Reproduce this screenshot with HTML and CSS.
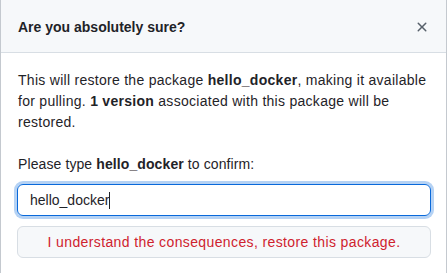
FILE: index.html
```html
<!DOCTYPE html>
<html>
<head>
<meta charset="utf-8">
<link rel="stylesheet" href="styles.css">
</head>
<body>
<div class="dialog">
  <div class="header">
    <h1 class="title">Are you absolutely sure?</h1>
    <button class="close" aria-label="Close">
      <svg width="16" height="16" viewBox="0 0 16 16"><path d="M3.72 3.72a.75.75 0 0 1 1.06 0L8 6.94l3.22-3.22a.75.75 0 1 1 1.06 1.06L9.06 8l3.22 3.22a.75.75 0 1 1-1.06 1.06L8 9.06l-3.22 3.22a.75.75 0 0 1-1.06-1.06L6.94 8 3.72 4.78a.75.75 0 0 1 0-1.06Z" fill="#57606a"/></svg>
    </button>
  </div>
  <div class="body">
    <p class="desc">This will restore the package <b>hello_docker</b>, making it available for pulling. <b>1 version</b> associated with this package will be restored.</p>
    <p class="label">Please type <b>hello_docker</b> to confirm:</p>
    <div class="input"><span>hello_docker</span><span class="caret"></span></div>
    <button class="danger">I understand the consequences, restore this package.</button>
  </div>
</div>
</body>
</html>
```
FILE: styles.css
```css
html, body {
  margin: 0;
  padding: 0;
  background: #ffffff;
}
body {
  font-family: "Liberation Sans", Arial, sans-serif;
  font-size: 14px;
  line-height: 21px;
  color: #1f2328;
}
.dialog {
  width: 445px;
  height: 273px;
  border-left: 1px solid #c4c9cf;
  border-right: 1px solid #c4c9cf;
  box-sizing: content-box;
}
.header {
  height: 52px;
  background: #f6f8fa;
  border-bottom: 1px solid #d8dee4;
  display: flex;
  align-items: center;
  justify-content: space-between;
  padding: 0 16px 0 17px;
}
.title {
  margin: 0;
  font-size: 14px;
  font-weight: bold;
  line-height: 21px;
  padding-top: 2px;
}
.close {
  border: 0;
  background: transparent;
  padding: 0;
  width: 16px;
  height: 16px;
  display: flex;
  margin-top: 2px;
}
.body {
  padding: 17px 15px 0 16px;
}
.desc {
  margin: 0 0 21px 1px;
  letter-spacing: 0.28px;
}
.label {
  margin: 0 0 9px 1px;
  letter-spacing: 0.1px;
}
.input {
  height: 30px;
  border: 1px solid #0969da;
  border-radius: 6px;
  box-shadow: 0 0 0 3px rgba(9, 105, 218, 0.3);
  display: flex;
  align-items: center;
  padding: 0 12px;
  line-height: 20px;
}
.caret {
  display: inline-block;
  width: 1px;
  height: 17px;
  background: #1f2328;
}
.danger {
  display: block;
  width: 100%;
  height: 32px;
  margin-top: 10px;
  border: 1px solid #d8dee4;
  border-radius: 6px;
  background: #f6f8fa;
  color: #cf222e;
  font-family: "Liberation Sans", Arial, sans-serif;
  font-size: 14px;
  letter-spacing: 0.38px;
  padding: 0;
}
```
